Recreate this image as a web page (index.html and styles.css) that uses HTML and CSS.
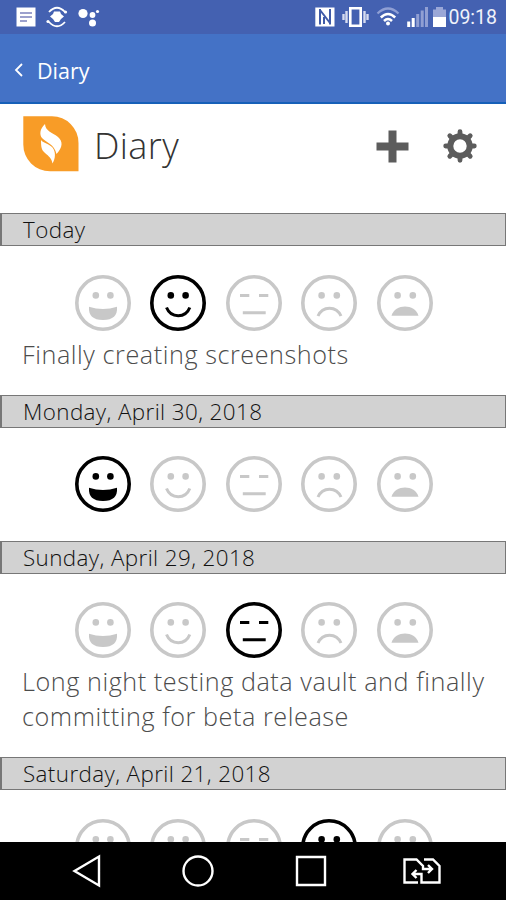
FILE: index.html
```html
<!DOCTYPE html>
<html lang="en">
<head>
    <meta charset="UTF-8">
    <meta name="viewport" content="width=device-width, initial-scale=1.0">
    <title>Diary</title>
    <link rel="stylesheet" href="styles.css">
</head>
<body>
    <!-- Shared face icons -->
    <svg class="icon-defs" width="0" height="0">
        <symbol id="face-great" viewBox="0 0 56 56">
            <circle class="line" cx="28" cy="28" r="26.2"/>
            <circle class="fill" cx="20.8" cy="20.4" r="3.3"/>
            <circle class="fill" cx="35.4" cy="20.4" r="3.3"/>
            <path class="fill" d="M14 31.8Q28 36.4 42 31.8Q43 45 28 45Q13 45 14 31.8Z"/>
        </symbol>
        <symbol id="face-good" viewBox="0 0 56 56">
            <circle class="line" cx="28" cy="28" r="26.2"/>
            <circle class="fill" cx="20.8" cy="20.4" r="3.3"/>
            <circle class="fill" cx="35.6" cy="20.4" r="3.3"/>
            <path class="line thin" d="M16.5 32.5C21 43.5 35.5 43.5 39.8 32.5"/>
        </symbol>
        <symbol id="face-okay" viewBox="0 0 56 56">
            <circle class="line" cx="28" cy="28" r="26.2"/>
            <path class="line thin" d="M14 20.5H23.3M33 20.5H42.3M16.8 37.8H39.7"/>
        </symbol>
        <symbol id="face-bad" viewBox="0 0 56 56">
            <circle class="line" cx="28" cy="28" r="26.2"/>
            <circle class="fill" cx="20.6" cy="20.4" r="3.3"/>
            <circle class="fill" cx="35.8" cy="20.4" r="3.3"/>
            <path class="line thin" d="M17 41C21.5 30.5 35.5 30.5 40 41"/>
        </symbol>
        <symbol id="face-awful" viewBox="0 0 56 56">
            <circle class="line" cx="28" cy="28" r="26.2"/>
            <circle class="fill" cx="20.6" cy="20.4" r="3.3"/>
            <circle class="fill" cx="35.8" cy="20.4" r="3.3"/>
            <path class="fill" d="M14.5 40.8C18 28.5 38 28.5 41.5 40.8Z"/>
        </symbol>
    </svg>

    <div class="status-bar">
        <div class="status-left">
            <svg width="20" height="20" viewBox="0 0 20 20">
                <path fill="#fff" d="M0.5 0.5H19.5V19.5H0.5Z"/>
                <path stroke="#7c83bd" stroke-width="1.5" d="M4 6H16M4 10H16M4 14H11"/>
            </svg>
            <svg width="22" height="22" viewBox="0 0 22 22">
                <path fill="none" stroke="#fff" stroke-width="1.8" d="M3 6Q11 -2.5 19 6M3 16Q11 24.5 19 16"/>
                <circle cx="19.5" cy="6" r="1.6" fill="#fff"/>
                <circle cx="2" cy="15.5" r="1.6" fill="#fff"/>
                <path fill="#fff" d="M8 5.5H14L15 8L18 10.5L15 13L13 16H9L7 13L4 10.5L7 8Z"/>
            </svg>
            <svg width="22" height="22" viewBox="0 0 22 22">
                <circle cx="5" cy="7.5" r="4.6" fill="#fff"/>
                <circle cx="14.5" cy="9" r="2.9" fill="#fff"/>
                <circle cx="14.5" cy="17" r="3.5" fill="#fff"/>
                <circle cx="19.5" cy="5.5" r="1.6" fill="#fff"/>
            </svg>
        </div>
        <div class="status-right">
            <svg width="20" height="20" viewBox="0 0 20 20">
                <path fill="#fff" d="M0.3 0.5H19.5V19.5H0.3Z"/>
                <path fill="none" stroke="#3f5aa8" stroke-width="2" d="M5 2V17.5M5 3L15 16M15 2V17.5M9 10V17"/>
            </svg>
            <svg width="27" height="20" viewBox="0 0 27 20">
                <path fill="none" stroke="#fff" stroke-width="2.6" d="M8.3 1.3H18.7V18.7H8.3Z"/>
                <path stroke="#d5dbf0" stroke-width="2.4" d="M4.5 4V16M22.5 4V16M1.5 7V13M25.5 7V13"/>
            </svg>
            <svg width="24" height="20" viewBox="0 0 24 20">
                <path fill="none" stroke="#8f9fd4" stroke-width="2.3" d="M1.5 6.5Q12 -3.5 22.5 6.5"/>
                <path fill="none" stroke="#fff" stroke-width="2.5" d="M4.8 10.5Q12 3.5 19.2 10.5M8 14Q12 10 16 14"/>
                <circle cx="12" cy="16.5" r="2" fill="#fff"/>
            </svg>
            <svg width="21" height="20" viewBox="0 0 21 20">
                <path stroke="#fff" stroke-width="3" d="M1.7 20V14.5M6.2 20V11"/>
                <path stroke="#909fd3" stroke-width="3" d="M10.7 20V7M15.2 20V3.5M19.5 20V0"/>
            </svg>
            <svg class="battery" width="13" height="20" viewBox="0 0 13 20">
                <path fill="#9aa7d7" d="M3 0H10V2.5H13V10H0V2.5H3Z"/>
                <path fill="#fff" d="M0 10H13V20H0Z"/>
            </svg>
            <span class="clock">09:18</span>
        </div>
    </div>

    <nav class="top-nav">
        <svg width="10" height="14" viewBox="0 0 10 14">
            <path fill="none" stroke="#fff" stroke-width="1.8" d="M8 1L2 7L8 13"/>
        </svg>
        <span>Diary</span>
    </nav>

    <header>
        <svg class="logo" width="56" height="56" viewBox="0 0 56 56">
            <path fill="#f89c27" d="M0.3 0.3H29A26.5 26.5 0 0 1 55.5 27V55.3H27A26.7 26.7 0 0 1 0.3 28.5Z"/>
            <path fill="#fff" d="M22 8C16.5 13 16.5 19 19 22C23 26.5 31.5 28 33.5 38C40 31 40 25.5 35 21C29 16 22.5 15.5 22 8Z"/>
            <path fill="#fff" d="M18 24C18 31 18.5 34 22 37C26 40.5 28.5 42 29.5 47.5C32.5 42.5 33 36 29.5 31.5C26 27.5 20.5 27.5 18 24Z"/>
        </svg>
        <h1>Diary</h1>
        <div class="actions">
            <svg width="33" height="33" viewBox="0 0 33 33">
                <path fill="#5c5c5c" d="M12.5 0.5H20.5V12.5H32.5V20.5H20.5V32.5H12.5V20.5H0.5V12.5H12.5Z"/>
            </svg>
            <svg width="34" height="34" viewBox="0 0 34 34">
                <circle cx="17" cy="17" r="9.7" fill="none" stroke="#5c5c5c" stroke-width="6"/>
                <path stroke="#5c5c5c" stroke-width="4.8" stroke-linecap="round" d="M17 2.7V6M17 28V31.3M2.7 17H6M28 17H31.3M6.8 6.8L9 9M25 25L27.2 27.2M6.8 27.2L9 25M25 9L27.2 6.8"/>
            </svg>
        </div>
    </header>

    <main class="diary">
        <section class="entry">
            <h2>Today</h2>
            <div class="moods">
                <svg class="mood"><use href="#face-great"/></svg>
                <svg class="mood selected"><use href="#face-good"/></svg>
                <svg class="mood"><use href="#face-okay"/></svg>
                <svg class="mood"><use href="#face-bad"/></svg>
                <svg class="mood"><use href="#face-awful"/></svg>
            </div>
            <p>Finally creating screenshots</p>
        </section>
        <section class="entry">
            <h2>Monday, April 30, 2018</h2>
            <div class="moods">
                <svg class="mood selected"><use href="#face-great"/></svg>
                <svg class="mood"><use href="#face-good"/></svg>
                <svg class="mood"><use href="#face-okay"/></svg>
                <svg class="mood"><use href="#face-bad"/></svg>
                <svg class="mood"><use href="#face-awful"/></svg>
            </div>
        </section>
        <section class="entry">
            <h2>Sunday, April 29, 2018</h2>
            <div class="moods">
                <svg class="mood"><use href="#face-great"/></svg>
                <svg class="mood"><use href="#face-good"/></svg>
                <svg class="mood selected"><use href="#face-okay"/></svg>
                <svg class="mood"><use href="#face-bad"/></svg>
                <svg class="mood"><use href="#face-awful"/></svg>
            </div>
            <p>Long night testing data vault and finally<br>committing for beta release</p>
        </section>
        <section class="entry">
            <h2>Saturday, April 21, 2018</h2>
            <div class="moods">
                <svg class="mood"><use href="#face-great"/></svg>
                <svg class="mood"><use href="#face-good"/></svg>
                <svg class="mood"><use href="#face-okay"/></svg>
                <svg class="mood selected"><use href="#face-bad"/></svg>
                <svg class="mood"><use href="#face-awful"/></svg>
            </div>
        </section>
    </main>

    <footer>
        <svg width="30" height="34" viewBox="0 0 30 34">
            <path d="M2.5 17L27 2.5V31.5Z"/>
        </svg>
        <svg width="34" height="34" viewBox="0 0 34 34">
            <circle cx="17" cy="17" r="14.5"/>
        </svg>
        <svg width="34" height="34" viewBox="0 0 34 34">
            <path d="M3 3H31V31H3Z"/>
        </svg>
        <svg width="40" height="28" viewBox="0 0 40 28">
            <path d="M16 25.5H2.5V2.5H14.5L21 9V12H29M26 8L30 12L26 16M22 2.5H31L37.5 9V25.5H19.5V17H11M14.5 13L10.5 17L14.5 21"/>
        </svg>
    </footer>
</body>
</html>
```
FILE: styles.css
```css
* {
    box-sizing: border-box;
}

body {
    font-family: "Open Sans", sans-serif;
    background-color: #fff;
    color: #4c4c4c;
    margin: 0;
    height: 900px;
    display: flex;
    flex-direction: column;
    overflow: hidden;
}

svg {
    display: block;
    flex-shrink: 0;
}

.icon-defs {
    position: absolute;
}

.status-bar {
    background-color: #4461b1;
    height: 34px;
    flex-shrink: 0;
    padding: 0 9px 0 16px;
    display: flex;
    align-items: center;
    justify-content: space-between;
}

.status-left {
    display: flex;
    align-items: center;
    gap: 10px;
}

.status-right {
    display: flex;
    align-items: center;
    gap: 7px;
}

.battery {
    margin-left: -2px;
}

.clock {
    font-family: Roboto, sans-serif;
    font-size: 19.5px;
    line-height: 34px;
    color: #f0f2fa;
    margin-left: -5px;
    padding-top: 2px;
}

.top-nav {
    background-color: #4472c6;
    border-bottom: 2px solid #1660b8;
    height: 70px;
    flex-shrink: 0;
    padding: 4px 14px 0;
    display: flex;
    align-items: center;
    gap: 13px;
    color: #fff;
    font-size: 21.5px;
}

header {
    height: 109px;
    flex-shrink: 0;
    padding: 12px 29px 0 23px;
    display: flex;
    align-items: flex-start;
}

h1 {
    font-size: 36px;
    font-weight: 300;
    letter-spacing: 0.4px;
    line-height: 60px;
    color: #333;
    margin: 0 0 0 15px;
}

.actions {
    display: flex;
    align-items: center;
    gap: 34px;
    margin-left: auto;
    padding-top: 13px;
}

.diary {
    flex: 1;
    min-height: 0;
    overflow: hidden;
}

.entry {
    padding-bottom: 22.5px;
}

h2 {
    background-color: #d2d2d2;
    border: 1px solid #777;
    border-left-width: 2px;
    color: #111;
    font-size: 22.4px;
    font-weight: 300;
    letter-spacing: 0.4px;
    line-height: 31px;
    height: 33px;
    margin: 0;
    padding-left: 21px;
}

.moods {
    display: flex;
    gap: 19.4px;
    margin: 28.5px 0 6px 75px;
}

.mood {
    width: 56px;
    height: 56px;
    color: #c8c8c8;
}

.mood.selected {
    color: #000;
}

.line {
    fill: none;
    stroke: currentColor;
    stroke-width: 3.6;
}

.thin {
    stroke-width: 3;
}

.fill {
    fill: currentColor;
}

.entry p {
    font-size: 25.2px;
    font-weight: 300;
    letter-spacing: 0.56px;
    line-height: 35px;
    margin: 0;
    padding: 0 0 0.5px 22px;
    white-space: nowrap;
}

footer {
    background-color: #000;
    height: 58px;
    flex-shrink: 0;
    display: flex;
    align-items: center;
    gap: 79px;
    padding-left: 72px;
}

footer svg {
    fill: none;
    stroke: #fff;
    stroke-width: 2.4;
}

footer svg:last-child {
    margin-left: -5px;
}
```
